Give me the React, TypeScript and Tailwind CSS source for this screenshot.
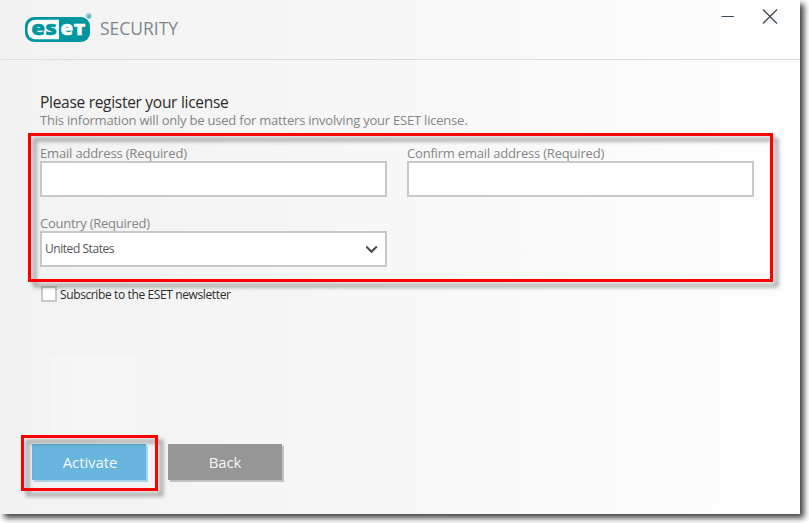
import type { ReactNode } from "react";

function Highlight({ className }: { className: string }) {
  return (
    <div
      className={`pointer-events-none absolute border-3 border-[#ff0000] drop-shadow-[5px_5px_2px_rgba(0,0,0,0.42)] ${className}`}
    />
  );
}

function Logo() {
  return (
    <svg width="160" height="32" viewBox="0 0 160 32" className="block">
      <rect x="1" y="5" width="65" height="25" rx="9" fill="#0096a1" />
      <path d="M35 7.700H12.500C7 7.700 3.500 10.500 3.500 17.500s3.500 9.800 9 9.800H35z" fill="#fff" />
      <g fontFamily="'Open Sans', sans-serif" fontWeight="800" strokeWidth="0.5">
        <text x="7.300" y="23" fontSize="20" textLength="25.500" lengthAdjust="spacingAndGlyphs" fill="#0096a1" stroke="#0096a1">es</text>
        <text x="36.600" y="23" fontSize="20" textLength="12.700" lengthAdjust="spacingAndGlyphs" fill="#fff" stroke="#fff">e</text>
        <text x="49.700" y="23" fontSize="16" textLength="11.500" lengthAdjust="spacingAndGlyphs" fill="#fff" stroke="#fff">T</text>
      </g>
      <circle cx="64.800" cy="4" r="2.300" fill="none" stroke="#0096a1" strokeWidth="0.7" />
      <text x="63.500" y="5.500" fontSize="4" fontWeight="700" fontFamily="'Open Sans', sans-serif" fill="#0096a1">R</text>
      <text x="76" y="23.200" fontSize="17.300" textLength="78" lengthAdjust="spacingAndGlyphs" fontFamily="'Open Sans', sans-serif" fill="#7d868c">SECURITY</text>
    </svg>
  );
}

function Field({ label, spacing, children }: { label: string; spacing: string; children?: ReactNode }) {
  return (
    <label className="block w-[347px]">
      <span className={`block h-[15px] text-[13px] leading-[15px] whitespace-nowrap text-[#858585] ${spacing}`}>{label}</span>
      <span className="flex h-9 items-center justify-between border-2 border-[#c8c8c8] bg-white pr-[7px] pl-[3px]">{children}</span>
    </label>
  );
}

export default function App() {
  return (
    <div className="h-[523px] w-[809px] overflow-hidden bg-white font-['Open_Sans','Noto_Sans',sans-serif]">
      <div className="relative flex h-[514px] w-[800px] flex-col bg-linear-to-r from-[#f2f2f2] via-[#f8f8f8] via-55% to-[#fdfdfd] to-90% shadow-[4px_4px_6px_rgba(0,0,0,0.75)]">
        <header className="flex h-[60px] shrink-0 justify-between border-b border-[#dcdcdc] pt-3 pr-[22px] pl-6">
          <Logo />
          <svg width="58" height="18" viewBox="0 0 58 18" fill="none" stroke="#3e4a54" className="-mt-[4px]">
            <path d="M1.500 8.500H14" strokeWidth="1" />
            <path d="M43 1.500L57 15.500M57 1.500L43 15.500" strokeWidth="1.300" />
          </svg>
        </header>

        <main className="flex grow flex-col pt-[31px] pl-10">
          <h1 className="h-[21px] text-[15.5px] leading-[22px] tracking-[-0.29px] whitespace-nowrap text-[#2b2b2b]">Please register your license</h1>
          <p className="h-4 text-[13px] leading-4 tracking-[-0.215px] whitespace-nowrap text-[#858585]">
            This information will only be used for matters involving your ESET license.
          </p>

          <section className="relative mt-[18px] grid w-[714px] grid-cols-2 gap-x-5 gap-y-[19px]">
            <Field label="Email address (Required)" spacing="tracking-[-0.16px]" />
            <Field label="Confirm email address (Required)" spacing="tracking-[-0.19px]" />
            <Field label="Country (Required)" spacing="tracking-[-0.26px]">
              <span className="text-[12px] tracking-[-0.45px] whitespace-nowrap text-[#555]">United States</span>
              <svg width="12" height="9" viewBox="0 0 12 9" fill="none" stroke="#4a4a4a" strokeWidth="2">
                <path d="M0.200 1.500L5.500 6.800L10.800 1.500" />
              </svg>
            </Field>
            <Highlight className="-top-[13px] -left-3 h-[149px] w-[745px]" />
          </section>

          <label className="mt-[19px] flex h-4 items-center gap-[3px] pl-px">
            <span className="size-4 border-2 border-[#c8c8c8] bg-white" />
            <span className="h-4 text-[12px] leading-[17px] tracking-[-0.38px] whitespace-nowrap text-[#2b2b2b]">Subscribe to the ESET newsletter</span>
          </label>

          <div className="mt-[54px] ml-[9px] h-[79px] w-[86px] bg-white/25" />

          <div className="relative mt-[9px] -ml-2 flex gap-[22px]">
            <button className="h-9 w-[114px] bg-[#68b5dd] pl-0.5 text-[15px] tracking-[-0.1px] text-[#f3faff] shadow-[2px_2px_0_#a9d2e8]">Activate</button>
            <button className="h-9 w-[114px] bg-[#969696] text-[15px] tracking-[-0.2px] text-[#f5f5f5] shadow-[2px_2px_0_#c2c2c2]">Back</button>
            <Highlight className="-top-[9px] -left-[11px] h-14 w-[137px]" />
          </div>
        </main>
      </div>
    </div>
  );
}
